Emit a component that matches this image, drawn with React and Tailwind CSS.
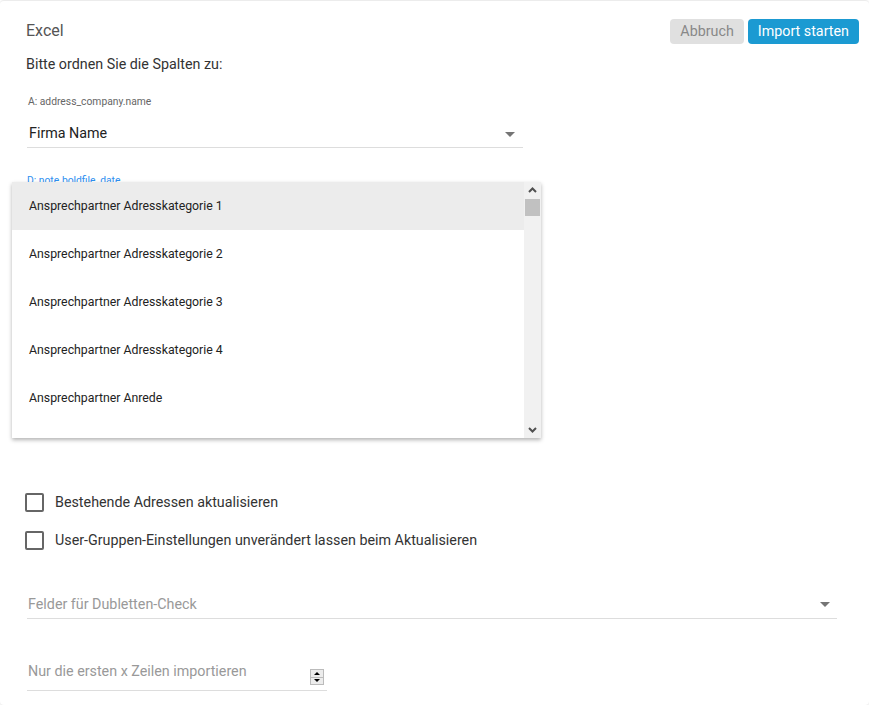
import React from 'react';

const items = [
  'Ansprechpartner Adresskategorie 1',
  'Ansprechpartner Adresskategorie 2',
  'Ansprechpartner Adresskategorie 3',
  'Ansprechpartner Adresskategorie 4',
  'Ansprechpartner Anrede',
];

const Caret = () => (
  <span className="w-0 h-0 border-l-[5px] border-r-[5px] border-t-[5px] border-l-transparent border-r-transparent border-t-[#757575]"></span>
);

const Checkbox = ({ label }) => (
  <label className="flex items-center gap-[11px] h-[21px]">
    <span className="w-[19px] h-[19px] rounded-[2px] border-2 border-[#666] bg-white"></span>
    <span className="text-[14.3px] text-[#333]">{label}</span>
  </label>
);

const App = () => {
  return (
    <div className="w-[869px] h-[705px] bg-white overflow-hidden" style={{ fontFamily: 'Roboto, "Liberation Sans", sans-serif' }}>
      <div className="relative h-full rounded-[4px] border-t border-[#ececec] shadow-[0_1px_3px_rgba(0,0,0,0.12)] px-[26px]">
        {/* Header */}
        <div className="flex justify-between items-start pt-[20px]">
          <h1 className="text-[16px] leading-[20px] text-[#555] font-normal">Excel</h1>
          <div className="flex gap-[4px] -mr-[16px] mt-[-2px]">
            <button className="h-[25px] px-[10px] rounded-[4px] bg-[#e0e0e0] text-[#888] text-[14.3px]">Abbruch</button>
            <button className="h-[25px] px-[10px] rounded-[4px] bg-[#1b9ad2] text-white text-[14.3px]">Import starten</button>
          </div>
        </div>

        <p className="mt-[11px] text-[14.3px] leading-[18px] text-[#333]">Bitte ordnen Sie die Spalten zu:</p>

        {/* Column A */}
        <div className="mt-[23px] w-[496px] ml-[1px]">
          <div className="text-[10.3px] leading-[12px] text-[#666] pl-[1px]">A: address_company.name</div>
          <div className="flex items-center justify-between h-[27px] mt-[13px] border-b border-[#ddd] pl-[2px] pr-[8px]">
            <span className="text-[14.3px] text-[#222]">Firma Name</span>
            <Caret />
          </div>
        </div>

        {/* Column D */}
        <div className="mt-[27px] ml-[1px] text-[10.3px] leading-[12px] text-[#2e8ff0]">D: note.boldfile_date</div>

        {/* Dropdown menu */}
        <div className="absolute left-[12px] top-[181px] w-[529px] h-[256px] bg-white flex shadow-[0_2px_4px_rgba(0,0,0,0.3)]">
          <ul className="flex-1">
            {items.map((it, i) => (
              <li key={it} className={`h-[48px] flex items-center pl-[17px] text-[12.3px] text-[#222] ${i === 0 ? 'bg-[#ececec]' : ''}`}>{it}</li>
            ))}
          </ul>
          <div className="w-[17px] bg-[#f1f1f1] flex flex-col items-center">
            <svg width="17" height="17" viewBox="0 0 17 17"><path d="M5 10 L8.5 6.5 L12 10" stroke="#505050" strokeWidth="2" fill="none" /></svg>
            <div className="w-[15px] h-[17px] bg-[#c1c1c1]"></div>
            <div className="flex-1"></div>
            <svg width="17" height="17" viewBox="0 0 17 17"><path d="M5 7 L8.5 10.5 L12 7" stroke="#505050" strokeWidth="2" fill="none" /></svg>
          </div>
        </div>

        {/* Checkboxes */}
        <div className="mt-[305px] flex flex-col gap-[17px] ml-[-1px]">
          <Checkbox label="Bestehende Adressen aktualisieren" />
          <Checkbox label="User-Gruppen-Einstellungen unverändert lassen beim Aktualisieren" />
        </div>

        {/* Dubletten */}
        <div className="mt-[40px] w-[810px] ml-[1px] flex items-center justify-between h-[28px] border-b border-[#ddd] pl-[1px] pr-[7px]">
          <span className="text-[14.3px] text-[#999]">Felder für Dubletten-Check</span>
          <Caret />
        </div>

        {/* Nur die ersten */}
        <div className="mt-[35px] w-[300px] ml-[1px] flex items-center justify-between h-[37px] border-b border-[#ddd] pl-[1px] pr-[3px]">
          <span className="text-[14.3px] text-[#999]">Nur die ersten x Zeilen importieren</span>
          <span className="flex flex-col w-[14px] h-[16px] mt-[10px] border border-[#bbb] bg-[#ececec]">
            <span className="flex-1 flex items-center justify-center border-b border-[#bbb]">
              <span className="w-0 h-0 border-l-[3px] border-r-[3px] border-b-[3px] border-l-transparent border-r-transparent border-b-black"></span>
            </span>
            <span className="flex-1 flex items-center justify-center">
              <span className="w-0 h-0 border-l-[3px] border-r-[3px] border-t-[3px] border-l-transparent border-r-transparent border-t-black"></span>
            </span>
          </span>
        </div>
      </div>
    </div>
  );
};

export default App;
